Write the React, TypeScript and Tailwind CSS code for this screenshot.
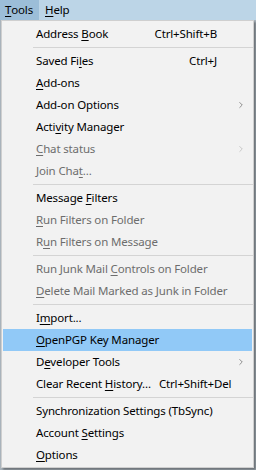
import { ChevronRight } from "lucide-react";

type Item =
  | { sep: true }
  | { sep?: false; label: string; shortcut?: string; sub?: boolean; disabled?: boolean; active?: boolean };

const items: Item[] = [
  { label: "Address &Book", shortcut: "Ctrl+Shift+B" },
  { sep: true },
  { label: "Saved Fi&les", shortcut: "Ctrl+J" },
  { label: "&Add-ons" },
  { label: "Add-on Options", sub: true },
  { label: "Acti&vity Manager" },
  { label: "&Chat status", sub: true, disabled: true },
  { label: "Join Cha&t...", disabled: true },
  { sep: true },
  { label: "Message &Filters" },
  { label: "&Run Filters on Folder", disabled: true },
  { label: "R&un Filters on Message", disabled: true },
  { sep: true },
  { label: "Run Junk Mail &Controls on Folder", disabled: true },
  { label: "&Delete Mail Marked as Junk in Folder", disabled: true },
  { sep: true },
  { label: "I&mport..." },
  { label: "&OpenPGP Key Manager", active: true },
  { label: "D&eveloper Tools", sub: true },
  { label: "Clear Recent &History...", shortcut: "Ctrl+Shift+Del" },
  { sep: true },
  { label: "Synchronization Settings (TbSync)" },
  { label: "Account &Settings" },
  { label: "&Options" },
];

// "&" marks the access key letter
function Label({ text }: { text: string }) {
  const i = text.indexOf("&");
  if (i < 0) return <>{text}</>;
  return (
    <>
      {text.slice(0, i)}
      <span className="underline underline-offset-2">{text[i + 1]}</span>
      {text.slice(i + 2)}
    </>
  );
}

export default function App() {
  return (
    <div
      className="w-[256px] h-[470px] bg-[#a9b3bb] text-[11.5px] tracking-[-0.15px] text-black overflow-hidden"
      style={{ fontFamily: '"Noto Sans", "Open Sans", sans-serif' }}
    >
      <div className="flex h-[20px] bg-[#bcd5e7]">
        <div className="flex items-center pl-[5px] w-[39px] bg-[#9cbed8]">
          <Label text="&Tools" />
        </div>
        <div className="flex items-center pl-[6px]">
          <Label text="&Help" />
        </div>
      </div>
      <div className="ml-[1px] w-[253px] h-[448px] bg-[#f2f2f2] border border-[#cfcfcf] pt-[2px] shadow-[2px_2px_2px_rgba(0,0,0,0.35)]">
        {items.map((it, i) =>
          it.sep ? (
            <div key={i} className="h-[5px] flex items-center pl-[31px]">
              <div className="h-px w-full bg-[#d4d4d4]" />
            </div>
          ) : (
            <div
              key={i}
              className={`relative h-[22px] flex items-center gap-[8px] pl-[33px] pr-[35px] mx-px ${
                it.active ? "bg-[#91c9f7]" : ""
              } ${it.disabled ? "text-[#6d6d6d]" : ""}`}
            >
              <span className="flex-1 whitespace-nowrap">
                <Label text={it.label} />
              </span>
              {it.shortcut && <span className="whitespace-nowrap">{it.shortcut}</span>}
              {it.sub && (
                <ChevronRight
                  className={`absolute right-[6px] h-[10px] w-[10px] ${
                    it.disabled ? "text-[#a0a0a0]" : "text-[#333]"
                  }`}
                  strokeWidth={1.25}
                />
              )}
            </div>
          )
        )}
      </div>
    </div>
  );
}
